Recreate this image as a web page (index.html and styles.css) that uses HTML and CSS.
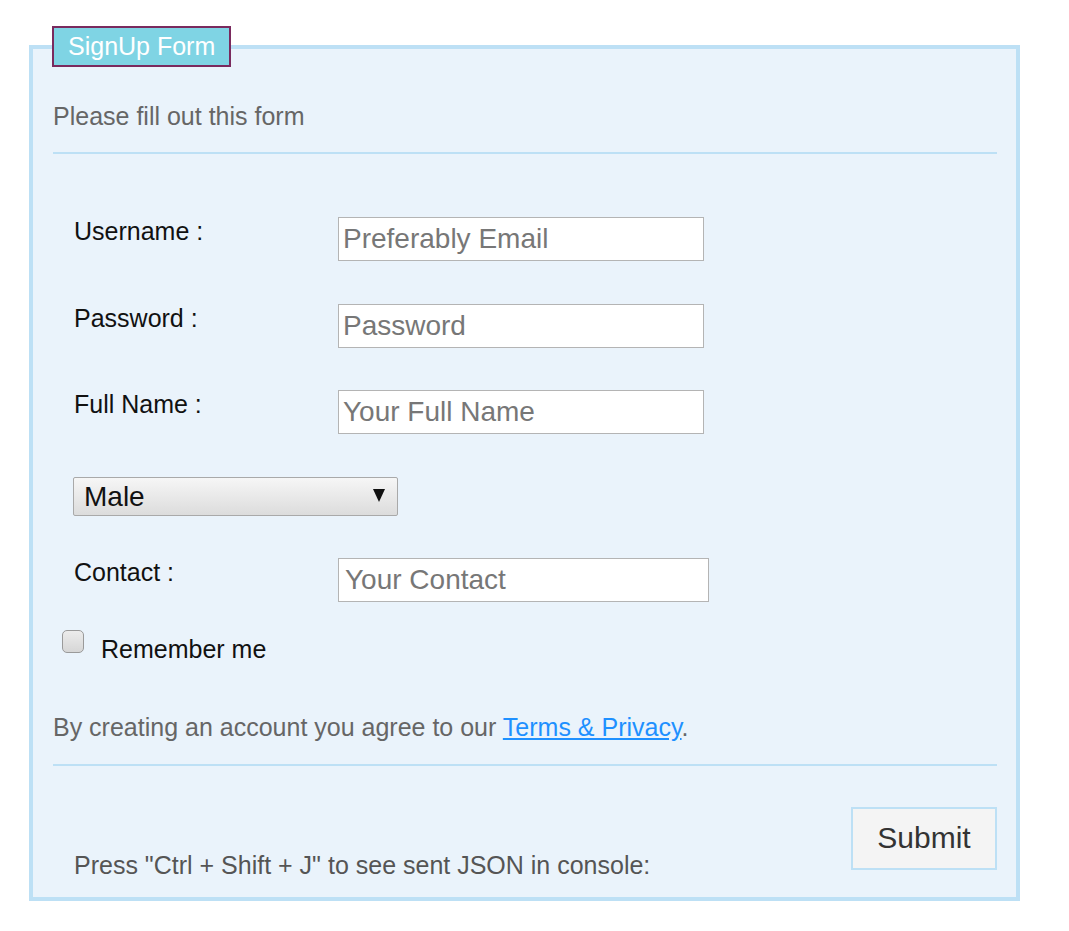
FILE: index.html
```html
<!DOCTYPE html>
<html>
<head>
<meta charset="utf-8">
<link rel="stylesheet" href="styles.css">
</head>
<body>
<div class="page">
  <form class="signup">
    <fieldset class="box">
      <legend class="title">SignUp Form</legend>
      <p class="intro">Please fill out this form</p>
      <hr class="rule">
      <div class="fields">
        <div class="row">
          <label class="lbl">Username :</label>
          <input class="txt" type="text" placeholder="Preferably Email">
        </div>
        <div class="row">
          <label class="lbl">Password :</label>
          <input class="txt" type="password" placeholder="Password">
        </div>
        <div class="row">
          <label class="lbl">Full Name :</label>
          <input class="txt" type="text" placeholder="Your Full Name">
        </div>
        <div class="row row-select">
          <span class="sel-wrap">
            <select class="sel">
              <option>Male</option>
              <option>Female</option>
            </select>
            <svg class="sel-arrow" width="12" height="13" viewBox="0 0 12 13"><polygon points="0,0 12,0 6,13" fill="#111"/></svg>
          </span>
        </div>
        <div class="row row-last">
          <label class="lbl">Contact :</label>
          <input class="txt txt-wide" type="text" placeholder="Your Contact">
        </div>
        <div class="remember">
          <input class="chk" type="checkbox">
          <span class="remember-text">Remember me</span>
        </div>
      </div>
      <p class="terms">By creating an account you agree to our <a class="link" href="#">Terms &amp; Privacy</a>.</p>
      <hr class="rule rule-bottom">
      <div class="footer">
        <p class="hint">Press "Ctrl + Shift + J" to see sent JSON in console:</p>
        <button class="submit" type="button">Submit</button>
      </div>
    </fieldset>
  </form>
</div>
</body>
</html>
```
FILE: styles.css
```css
html, body {
  margin: 0;
  padding: 0;
  background: #ffffff;
}
body {
  font-family: "Liberation Sans", Arial, sans-serif;
}
.page {
  padding: 26px 0 0 29px;
}
.signup {
  margin: 0;
}
.box {
  width: 991px;
  box-sizing: border-box;
  margin: 0;
  border: 4px solid #bde0f5;
  background: #eaf3fb;
  padding: 0 19px 0 20px;
}
.title {
  background: #7fd4e4;
  border: 2px solid #7a2a5e;
  color: #ffffff;
  font-size: 25px;
  line-height: 37px;
  padding: 0 14px;
  margin-left: -1px;
}
.intro {
  margin: 35px 0 0 0;
  font-size: 25px;
  line-height: 29px;
  color: #666666;
}
.rule {
  border: 0;
  border-top: 2px solid #bde0f5;
  margin: 21px 0 0 0;
  height: 0;
}
.fields {
  padding: 63px 0 0 0;
}
.row {
  display: flex;
  align-items: flex-start;
  margin-bottom: 42.5px;
}
.lbl {
  width: 264px;
  padding-left: 21px;
  padding-top: 0;
  font-size: 25px;
  line-height: 29px;
  color: #111111;
}
.txt {
  width: 366px;
  height: 44px;
  box-sizing: border-box;
  border: 1px solid #b4b4b4;
  background: #ffffff;
  font-family: "Liberation Sans", Arial, sans-serif;
  font-size: 28px;
  padding: 0 4px;
  margin: 0;
  color: #222222;
}
.txt::placeholder {
  color: #777777;
}
.txt-wide {
  width: 371px;
  padding-left: 6px;
}
.row-select {
  padding-left: 20px;
}
.sel-wrap {
  position: relative;
  display: inline-block;
}
.sel {
  appearance: none;
  -webkit-appearance: none;
  display: block;
  width: 325px;
  height: 39px;
  box-sizing: border-box;
  border: 1px solid #a9a9a9;
  border-radius: 2px;
  background: linear-gradient(#f6f6f6, #dcdcdc);
  font-family: "Liberation Sans", Arial, sans-serif;
  font-size: 28px;
  color: #111111;
  padding: 0 0 0 10px;
  margin: 0;
}
.sel-arrow {
  position: absolute;
  right: 13px;
  top: 12px;
  pointer-events: none;
}
.row-last {
  margin-bottom: 0;
}
.remember {
  display: flex;
  align-items: flex-start;
  margin-top: 28px;
  padding-left: 9px;
}
.chk {
  appearance: none;
  -webkit-appearance: none;
  width: 22px;
  height: 23px;
  margin: 0;
  border: 1px solid #9a9a9a;
  border-radius: 5px;
  background: linear-gradient(#ececec, #d6d6d6);
  box-sizing: border-box;
}
.remember-text {
  margin-left: 17px;
  margin-top: 4.5px;
  font-size: 25px;
  line-height: 29px;
  color: #111111;
}
.terms {
  margin: 49px 0 0 0;
  font-size: 25px;
  line-height: 29px;
  color: #666666;
}
.link {
  color: #1e90ff;
  text-decoration: underline;
}
.rule-bottom {
  margin-top: 22px;
}
.footer {
  display: flex;
  justify-content: space-between;
  align-items: flex-start;
  padding-top: 41px;
  padding-bottom: 17px;
}
.hint {
  margin: 44.5px 0 0 21px;
  font-size: 25px;
  line-height: 29px;
  color: #555555;
}
.submit {
  width: 146px;
  height: 63px;
  border: 2px solid #bde0f5;
  background: #f4f4f4;
  font-family: "Liberation Sans", Arial, sans-serif;
  font-size: 30px;
  color: #333333;
  padding: 0;
  margin: 0;
}
```
